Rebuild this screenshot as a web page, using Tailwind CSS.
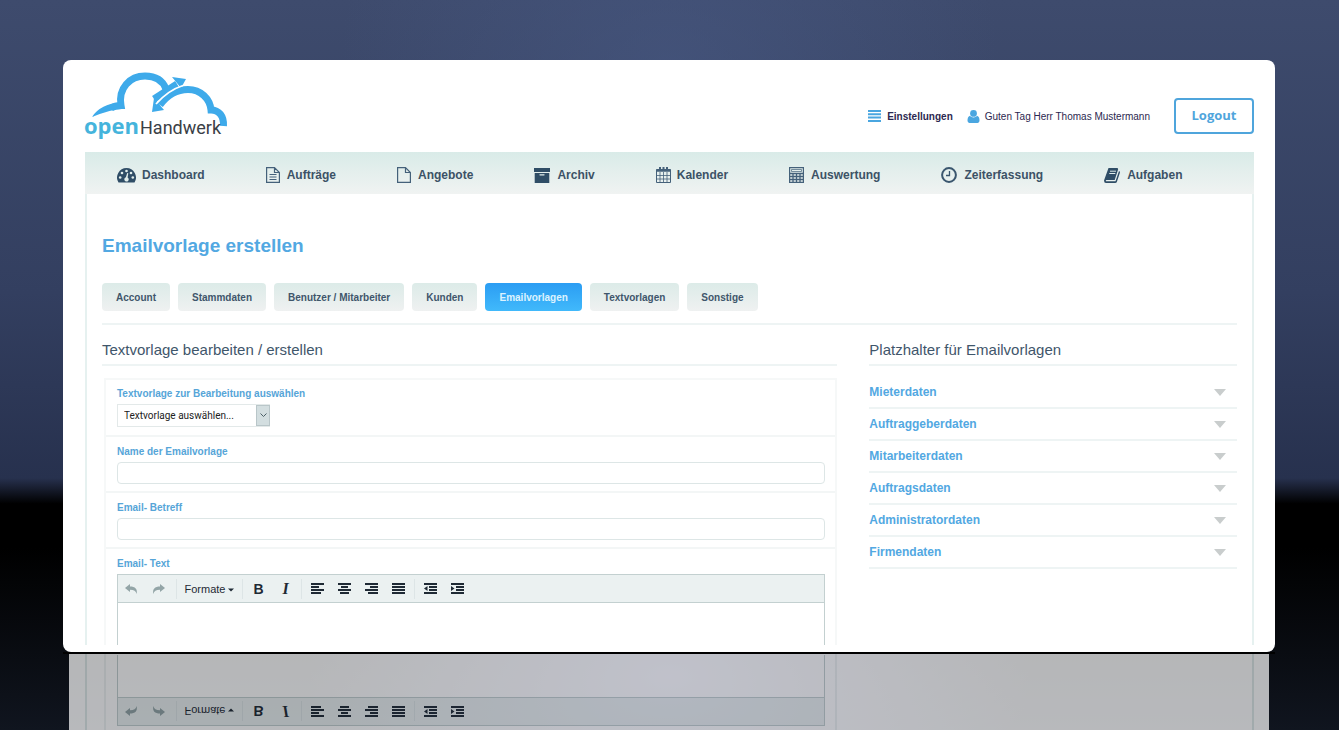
<!DOCTYPE html>
<html lang="de">
<head>
  <meta charset="UTF-8" />
  <meta name="viewport" content="width=device-width, initial-scale=1.0" />
  <title>openHandwerk - Emailvorlage erstellen</title>
  <script src="https://cdn.jsdelivr.net/npm/@tailwindcss/browser@4"></script>
</head>
<body class="min-h-screen overflow-hidden bg-black bg-[radial-gradient(ellipse_330px_300px_at_50%_9%,#47588299,transparent),linear-gradient(#3e4b6d,#333f60_40%,#27314e_65.5%,#000_69%,#000_75%,#10151f)] font-['Liberation_Sans',Arial,sans-serif] text-[#3f566b]">

  <main class="ml-[63px] mr-16 mt-[60px] rounded-lg bg-white pb-[7px] pl-[22px] pr-[21px]">
    <header class="flex h-[92px] items-center justify-between">
      <!-- Logo -->
      <a href="#" aria-label="openHandwerk" class="block pt-1">
        <svg width="146" height="72" viewBox="0 0 146 72" class="-ml-px">
          <g fill="none" stroke="#3eaaea">
            <path d="M27 36 Q31 33.500 37 33.500 C34 16 46 4 61 4 C72 4 79 9 82 17" stroke-width="7" />
            <path d="M8 45 Q16 32 38 30 L38 37 Q28 37 8 45 Z" fill="#3eaaea" stroke="none" />
            <path d="M70 27 L93 12" stroke-width="7" />
            <path d="M76 33 C84 22 94 17.500 104 17.500 C117 17.500 126 27 127 38 C135 38 140 44 139.500 54" stroke-width="7" />
          </g>
          <path d="M88 5 L102 7 L97 16 Z M70 26 L68 40 L80 38 Z" fill="#3eaaea" />
          <path d="M72 32 C80 23 88 17 99 13.500" fill="none" stroke="#fff" stroke-width="1.800" />
          <text x="0" y="62" fill="#45b4dc" class="font-['Open_Sans'] text-[22px] font-bold">open</text>
          <text x="56" y="62" fill="#3a4046" class="font-['Roboto'] text-[18px]">Handwerk</text>
        </svg>
      </a>
      <div class="flex items-center pt-5 text-[10px] text-[#2c2850]">
        <a href="#" class="flex items-center gap-1.5 font-bold">
          <svg width="13" height="12" viewBox="0 0 13 12" fill="#4aa6e0"><path d="M0 0h13v2H0zM0 3.300h13v2H0zM0 6.600h13v2H0zM0 9.900h13v2H0z" /></svg>
          Einstellungen
        </a>
        <a href="#" class="ml-3.5 flex items-center gap-[5px]">
          <svg width="13" height="13" viewBox="0 0 13 13" fill="#4aa6e0"><circle cx="6.500" cy="3.400" r="3.400" /><path d="M3 5.800 C4.500 8 8.500 8 10 5.800 C12 6.500 12.500 8.500 12.500 10.500 C12.500 12 11.500 13 10.500 13 H2.500 C1.500 13 .5 12 .5 10.500 C.5 8.500 1 6.500 3 5.800Z" /></svg>
          Guten Tag Herr Thomas Mustermann
        </a>
        <button type="button" class="ml-6 h-9 w-20 rounded border-2 border-[#4fa5dc] font-['Open_Sans',sans-serif] text-[13px] font-bold text-[#4fa5dc]">Logout</button>
      </div>
    </header>

    <nav class="flex h-[42px] items-center gap-[61px] bg-linear-to-b from-[#d9ebe8] to-[#f0f3f2] pl-8 pt-1 text-[12px] font-bold text-[#3c5266]">
      <a href="#" class="flex items-center gap-1.5">
        <svg width="19" height="15" viewBox="0 0 19 15"><path d="M9.500 0 A9.500 9.500 0 0 1 17.500 14.500 H1.500 A9.500 9.500 0 0 1 9.500 0Z" fill="#2f4d66" /><g fill="#e2eeec"><circle cx="3.200" cy="9.500" r="1.300" /><circle cx="5" cy="5" r="1.300" /><circle cx="9.500" cy="3" r="1.300" /><circle cx="14" cy="5" r="1.300" /><circle cx="15.800" cy="9.500" r="1.300" /><path d="M10.200 5 L11.300 5.300 L10.600 9.500 A2.200 2.200 0 1 1 8.900 9.300Z" /></g></svg>
        Dashboard
      </a>
      <a href="#" class="flex items-center gap-[7px]">
        <svg width="14" height="16" viewBox="0 0 14 16" fill="none" stroke="#44617a" stroke-width="1.200"><path d="M.6 .6 H8.500 L13.400 5.500 V15.400 H.6Z M8.500 .6 V5.500 H13.400 M3.500 7.500 H10.500 M3.500 10 H10.500 M3.500 12.500 H10.500" /></svg>
        Aufträge
      </a>
      <a href="#" class="flex items-center gap-[7px]">
        <svg width="14" height="16" viewBox="0 0 14 16" fill="none" stroke="#44617a" stroke-width="1.200"><path d="M.6 .6 H8.500 L13.400 5.500 V15.400 H.6Z M8.500 .6 V5.500 H13.400" /></svg>
        Angebote
      </a>
      <a href="#" class="flex items-center gap-[7px]">
        <svg width="16" height="15" viewBox="0 0 16 15"><path d="M0 0 H16 V4 H0Z M.7 5 H15.300 V15 H.7Z" fill="#2f4d66" /><path d="M6 6.800 H10" stroke="#e2eeec" stroke-width="1.300" stroke-linecap="round" /></svg>
        Archiv
      </a>
      <a href="#" class="flex items-center gap-1.5">
        <svg width="15" height="16" viewBox="0 0 15 16" fill="none" stroke="#44617a"><path d="M.5 2.500 H14.500 V15.500 H.5Z" /><path d="M.5 3.500 H14.500" stroke-width="2.500" /><path d="M4 0 V4 M11 0 V4 M7.500 0 V3" stroke-width="2" /><path d="M.5 8.500 H14.500 M.5 12 H14.500 M4 5 V15.500 M7.500 5 V15.500 M11 5 V15.500" stroke-width=".8" /></svg>
        Kalender
      </a>
      <a href="#" class="flex items-center gap-[7px]">
        <svg width="15" height="16" viewBox="0 0 15 16" fill="none" stroke="#44617a"><path d="M.6 .6 H14.400 V15.400 H.6Z" stroke-width="1.200" /><path d="M2.500 2.500 H12.500 V4.500 H2.500Z" stroke-width=".7" /><path d="M1 6.500 H14 M1 9.500 H14 M1 12.500 H14 M4 6.500 V15 M7.500 6.500 V15 M11 6.500 V15" stroke-width="1.300" /></svg>
        Auswertung
      </a>
      <a href="#" class="flex items-center gap-[7px]">
        <svg width="16" height="16" viewBox="0 0 16 16" fill="none" stroke="#3a566e"><circle cx="8" cy="8" r="6.900" stroke-width="2" /><path d="M8.500 4 V8.500 H5" stroke-width="1.300" /></svg>
        Zeiterfassung
      </a>
      <a href="#" class="flex items-center gap-[7px]">
        <svg width="16" height="15" viewBox="0 0 16 15"><path d="M4.500 0 H13 Q14.500 0 14 1.800 L10.700 12 H2.500 Q1.500 12 2 13.300 H11.500 L15 3 Q16.300 3.500 15.800 5 L13 13.500 Q12.600 15 11 15 H2 Q0 15 0 12.500Z" fill="#2f4d66" /><path d="M6 3.200 H12 M5.300 5.500 H11.300" stroke="#dfecea" /></svg>
        Aufgaben
      </a>
    </nav>

    <div class="border-x-2 border-[#e6f1f0] px-[15px]">
      <h1 class="pt-10 text-[19px] font-bold leading-6 text-[#52a8e2]">Emailvorlage erstellen</h1>

      <div class="mt-[25px] flex gap-2 text-[10px] font-bold">
        <button type="button" class="h-7 rounded bg-linear-to-b from-[#dcebe8] to-[#eff1f1] px-3.5">Account</button>
        <button type="button" class="h-7 rounded bg-linear-to-b from-[#dcebe8] to-[#eff1f1] px-3.5">Stammdaten</button>
        <button type="button" class="h-7 rounded bg-linear-to-b from-[#dcebe8] to-[#eff1f1] px-3.5">Benutzer / Mitarbeiter</button>
        <button type="button" class="h-7 rounded bg-linear-to-b from-[#dcebe8] to-[#eff1f1] px-3.5">Kunden</button>
        <button type="button" class="h-7 rounded bg-linear-to-b from-[#2b9df3] to-[#41b9fb] px-3.5 text-[#dcf3ff]">Emailvorlagen</button>
        <button type="button" class="h-7 rounded bg-linear-to-b from-[#dcebe8] to-[#eff1f1] px-3.5">Textvorlagen</button>
        <button type="button" class="h-7 rounded bg-linear-to-b from-[#dcebe8] to-[#eff1f1] px-3.5">Sonstige</button>
      </div>

      <div class="mt-3 grid grid-cols-[2fr_1fr] gap-x-8 border-t-2 border-[#eef4f4]">
        <section>
          <h2 class="border-b-2 border-[#eef4f4] pb-1 pt-[15px] text-[15px] leading-5">Textvorlage bearbeiten / erstellen</h2>
          <form class="ml-0.5 mt-3 divide-y-2 divide-[#f3f6f6] border-2 border-b-0 border-[#f6f8f8] text-[10px]">
            <div class="h-[57px] pl-[11px] pr-2.5 pt-2">
              <label for="template" class="block font-bold leading-3 text-[#56a5d8]">Textvorlage zur Bearbeitung auswählen</label>
              <div class="relative mt-1 w-[153px]">
                <select id="template" class="h-[23px] w-full appearance-none border border-[#e3e9e9] bg-white pl-1.5 font-['Roboto',sans-serif] text-[10px] text-[#222]">
                  <option>Textvorlage auswählen...</option>
                </select>
                <span class="pointer-events-none absolute inset-y-px right-0 flex w-3.5 items-center justify-center border border-[#b9c6c9] bg-[#d3dee0]">
                  <svg width="7" height="5" viewBox="0 0 7 5" fill="none" stroke="#4d6068"><path d="M.5 .5 L3.500 3.500 L6.500 .5" /></svg>
                </span>
              </div>
            </div>
            <div class="h-14 pl-[11px] pr-2.5 pt-[9px]">
              <label for="name" class="block font-bold leading-3 text-[#56a5d8]">Name der Emailvorlage</label>
              <input id="name" type="text" class="mt-1 block h-[22px] w-full rounded-sm border border-[#dde6e6] px-1" />
            </div>
            <div class="h-14 pl-[11px] pr-2.5 pt-[9px]">
              <label for="subject" class="block font-bold leading-3 text-[#56a5d8]">Email- Betreff</label>
              <input id="subject" type="text" class="mt-1 block h-[22px] w-full rounded-sm border border-[#dde6e6] px-1" />
            </div>
            <div class="pl-[11px] pr-2.5 pt-[9px]">
              <label for="text" class="block font-bold leading-3 text-[#56a5d8]">Email- Text</label>
              <div id="editor" class="mt-1 border border-b-0 border-[#c3d0d0]">
                <div class="flex h-7 items-center divide-x divide-[#dde5e6] border-b border-[#c3d0d0] bg-[#ebf1f1] text-[#1f2a35]">
                  <div class="flex pr-1">
                    <button type="button" aria-label="Rückgängig" class="flex h-5 w-[27px] items-center justify-center">
                      <svg width="13" height="10" viewBox="0 0 13 10" fill="#93a5a7"><path d="M0 4 L5 0 V2.500 C10 2.500 13 5 11.500 10 C11 7 9 5.700 5 5.700 V8Z" /></svg>
                    </button>
                    <button type="button" aria-label="Wiederholen" class="flex h-5 w-[27px] items-center justify-center">
                      <svg width="13" height="10" viewBox="0 0 13 10" fill="#93a5a7"><path d="M13 4 L8 0 V2.500 C3 2.500 0 5 1.500 10 C2 7 4 5.700 8 5.700 V8Z" /></svg>
                    </button>
                  </div>
                  <div class="flex">
                    <button type="button" class="flex h-5 w-[65px] items-center justify-center gap-[3px] pt-0.5 text-[11px]">
                      Formate
                      <svg width="6" height="4" viewBox="0 0 6 4" fill="currentColor"><path d="M0 .5h6L3 3.500z" /></svg>
                    </button>
                  </div>
                  <div class="flex px-0.5">
                    <button type="button" aria-label="Fett" class="h-5 w-[27px] text-[14px] font-bold leading-5">B</button>
                    <button type="button" aria-label="Kursiv" class="h-5 w-[27px] font-['Liberation_Serif',serif] text-[16px] font-bold italic leading-5">I</button>
                  </div>
                  <div class="flex px-0.5">
                    <button type="button" aria-label="Linksbündig" class="flex h-5 w-[27px] items-center justify-center">
                      <svg width="13" height="11" viewBox="0 0 13 11" fill="currentColor"><path d="M0 0h13v2H0zM0 3h8v2H0zM0 6h13v2H0zM0 9h10v2H0z" /></svg>
                    </button>
                    <button type="button" aria-label="Zentriert" class="flex h-5 w-[27px] items-center justify-center">
                      <svg width="13" height="11" viewBox="0 0 13 11" fill="currentColor"><path d="M0 0h13v2H0zM3 3h7v2H3zM0 6h13v2H0zM2 9h9v2H2z" /></svg>
                    </button>
                    <button type="button" aria-label="Rechtsbündig" class="flex h-5 w-[27px] items-center justify-center">
                      <svg width="13" height="11" viewBox="0 0 13 11" fill="currentColor"><path d="M0 0h13v2H0zM5 3h8v2H5zM0 6h13v2H0zM3 9h10v2H3z" /></svg>
                    </button>
                    <button type="button" aria-label="Blocksatz" class="flex h-5 w-[27px] items-center justify-center">
                      <svg width="13" height="11" viewBox="0 0 13 11" fill="currentColor"><path d="M0 0h13v2H0zM0 3h13v2H0zM0 6h13v2H0zM0 9h13v2H0z" /></svg>
                    </button>
                  </div>
                  <div class="flex px-0.5">
                    <button type="button" aria-label="Einzug verkleinern" class="flex h-5 w-[27px] items-center justify-center">
                      <svg width="13" height="11" viewBox="0 0 13 11" fill="currentColor"><path d="M0 0h13v2H0zM5 3h8v2H5zM5 6h8v2H5zM0 9h13v2H0zM0 5.500l3.500-2.500v5z" /></svg>
                    </button>
                    <button type="button" aria-label="Einzug vergrößern" class="flex h-5 w-[27px] items-center justify-center">
                      <svg width="13" height="11" viewBox="0 0 13 11" fill="currentColor"><path d="M0 0h13v2H0zM5 3h8v2H5zM5 6h8v2H5zM0 9h13v2H0zM3.500 5.500l-3.500-2.500v5z" /></svg>
                    </button>
                  </div>
                </div>
                <textarea id="text" class="block h-[42px] w-full resize-none p-2 outline-none"></textarea>
              </div>
            </div>
          </form>
        </section>

        <aside>
          <h2 class="border-b-2 border-[#eef4f4] pb-1 pt-[15px] text-[15px] leading-5">Platzhalter für Emailvorlagen</h2>
          <ul class="mt-[11px] text-[12px] font-bold text-[#52a8e2]">
            <li class="border-b-2 border-[#eef4f4]">
              <button type="button" class="flex h-[30px] w-full items-center justify-between pr-[11px]">Mieterdaten
                <svg width="12" height="7" viewBox="0 0 12 7" fill="#c9cdcd"><path d="M0 0h12L6 7z" /></svg></button>
            </li>
            <li class="border-b-2 border-[#eef4f4]">
              <button type="button" class="flex h-[30px] w-full items-center justify-between pr-[11px]">Auftraggeberdaten
                <svg width="12" height="7" viewBox="0 0 12 7" fill="#c9cdcd"><path d="M0 0h12L6 7z" /></svg></button>
            </li>
            <li class="border-b-2 border-[#eef4f4]">
              <button type="button" class="flex h-[30px] w-full items-center justify-between pr-[11px]">Mitarbeiterdaten
                <svg width="12" height="7" viewBox="0 0 12 7" fill="#c9cdcd"><path d="M0 0h12L6 7z" /></svg></button>
            </li>
            <li class="border-b-2 border-[#eef4f4]">
              <button type="button" class="flex h-[30px] w-full items-center justify-between pr-[11px]">Auftragsdaten
                <svg width="12" height="7" viewBox="0 0 12 7" fill="#c9cdcd"><path d="M0 0h12L6 7z" /></svg></button>
            </li>
            <li class="border-b-2 border-[#eef4f4]">
              <button type="button" class="flex h-[30px] w-full items-center justify-between pr-[11px]">Administratordaten
                <svg width="12" height="7" viewBox="0 0 12 7" fill="#c9cdcd"><path d="M0 0h12L6 7z" /></svg></button>
            </li>
            <li class="border-b-2 border-[#eef4f4]">
              <button type="button" class="flex h-[30px] w-full items-center justify-between pr-[11px]">Firmendaten
                <svg width="12" height="7" viewBox="0 0 12 7" fill="#c9cdcd"><path d="M0 0h12L6 7z" /></svg></button>
            </li>
          </ul>
        </aside>
      </div>
    </div>
  </main>

  <!-- Reflection below the card -->
  <div class="ml-[63px] mr-16 border-t-2 border-black px-1.5">
    <div class="bg-[radial-gradient(ellipse_360px_200px_at_50%_30%,#2c3150,transparent)]">
      <div inert aria-hidden="true" class="bg-white pl-4 pr-[15px] opacity-70">
        <div class="border-x-2 border-[#dfeae9] px-[15px]">
          <div class="grid grid-cols-[2fr_1fr] gap-x-8">
            <div id="mirror" class="ml-0.5 -scale-y-100 border-x-2 border-[#eef2f2] pb-px pl-[11px] pr-2.5 text-[10px]"></div>
          </div>
        </div>
      </div>
    </div>
  </div>

  <script>
    // The reflection shows a flipped copy of the editor
    const copy = document.getElementById('editor').cloneNode(true);
    copy.removeAttribute('id');
    copy.querySelector('textarea').removeAttribute('id');
    document.getElementById('mirror').appendChild(copy);
  </script>
</body>
</html>
